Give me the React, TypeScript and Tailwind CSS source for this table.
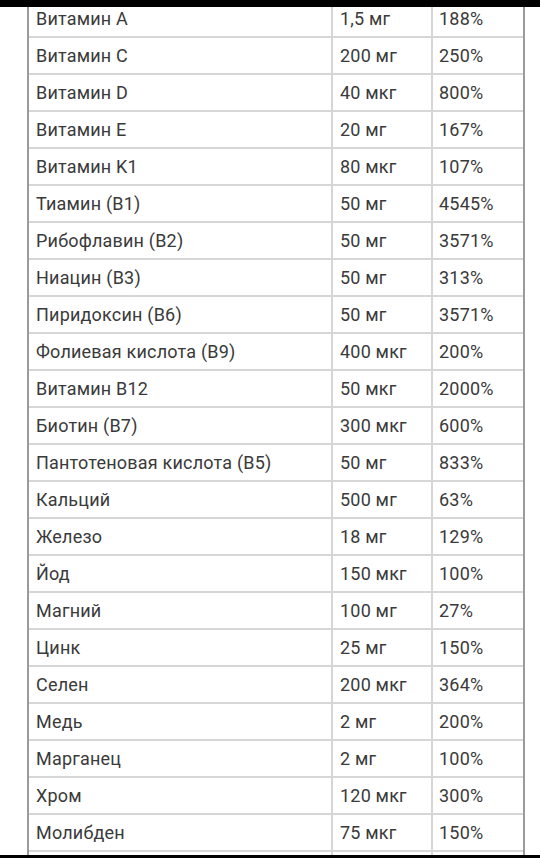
import React from 'react';

// Vitamin / mineral table: name, amount per serving, % of daily value
const rows: [string, string, string][] = [
  ['Витамин A', '1,5 мг', '188%'],
  ['Витамин C', '200 мг', '250%'],
  ['Витамин D', '40 мкг', '800%'],
  ['Витамин E', '20 мг', '167%'],
  ['Витамин K1', '80 мкг', '107%'],
  ['Тиамин (B1)', '50 мг', '4545%'],
  ['Рибофлавин (B2)', '50 мг', '3571%'],
  ['Ниацин (B3)', '50 мг', '313%'],
  ['Пиридоксин (B6)', '50 мг', '3571%'],
  ['Фолиевая кислота (B9)', '400 мкг', '200%'],
  ['Витамин B12', '50 мкг', '2000%'],
  ['Биотин (B7)', '300 мкг', '600%'],
  ['Пантотеновая кислота (B5)', '50 мг', '833%'],
  ['Кальций', '500 мг', '63%'],
  ['Железо', '18 мг', '129%'],
  ['Йод', '150 мкг', '100%'],
  ['Магний', '100 мг', '27%'],
  ['Цинк', '25 мг', '150%'],
  ['Селен', '200 мкг', '364%'],
  ['Медь', '2 мг', '200%'],
  ['Марганец', '2 мг', '100%'],
  ['Хром', '120 мкг', '300%'],
  ['Молибден', '75 мкг', '150%'],
  ['', '', ''],
];

const App: React.FC = () => {
  return (
    <div
      className="w-[540px] h-[858px] overflow-hidden bg-white flex flex-col text-[#3a3a3a]"
      style={{ fontFamily: 'Roboto, "Noto Sans", sans-serif' }}
    >
      <div className="h-[7px] shrink-0 bg-black relative z-10" />

      <div className="flex-1 min-h-0 overflow-hidden">
        <div className="-mt-[6px] ml-[27px] w-[498px] border-l-2 border-r-2 border-[#9a9a9a]">
          {rows.map(([name, amount, pct], i) => (
            <div
              key={i}
              className="grid grid-cols-[304px_100px_92px] h-[37px] border-b-2 border-[#d6d6d6] text-[18px] tracking-[0.2px] leading-none"
            >
              <div className="flex items-center pl-[7px] border-r-2 border-[#d6d6d6]">{name}</div>
              <div className="flex items-center pl-[7px] border-r-2 border-[#d6d6d6]">{amount}</div>
              <div className="flex items-center pl-[6px]">{pct}</div>
            </div>
          ))}
        </div>
      </div>

      <div className="h-[3px] shrink-0 bg-black" />
    </div>
  );
};

export default App;
